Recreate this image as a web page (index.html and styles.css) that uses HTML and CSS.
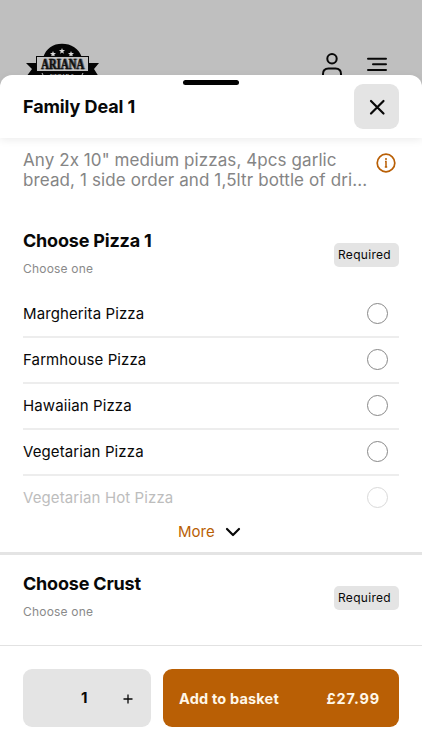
FILE: index.html
```html
<!DOCTYPE html>
<html lang="en">
<head>
<meta charset="utf-8">
<meta name="viewport" content="width=device-width, initial-scale=1">
<title>Family Deal 1</title>
<link rel="stylesheet" href="styles.css">
</head>
<body>
<div class="app">
  <header class="topbar">
    <svg class="logo" width="74" height="34" viewBox="0 0 74 34">
      <path d="M0 20h11v-2h52v2h10l-5 6 5 8H0l6-8z" fill="#050505"/>
      <path d="M17 15C20 5 27 .7 36 .7S53 5 56 15z" fill="#050505"/>
      <path d="M14 30h44v4H14z" fill="#050505"/>
      <g fill="#d8d8d8">
        <path id="star" d="M36 4.900l.8 2.100 2.200.1-1.700 1.400.6 2.200-1.900-1.200-1.900 1.200.6-2.200-1.700-1.400 2.200-.1z"/>
        <use href="#star" x="-9" y="3"/><use href="#star" x="9" y="3"/>
      </g>
      <rect x="10.500" y="13.500" width="52" height="15" fill="#c3c3c3" stroke="#080808" stroke-width="1"/>
      <text class="logo-name logo-shade" x="16" y="26" textLength="43" lengthAdjust="spacingAndGlyphs">ARIANA</text>
      <text class="logo-name" x="15" y="25.500" textLength="43" lengthAdjust="spacingAndGlyphs">ARIANA</text>
      <text class="logo-sub" x="24" y="34" textLength="25" lengthAdjust="spacingAndGlyphs">KEBAB &amp;</text>
      <path d="M16 30l2 4M57 30l-2 4" stroke="#c3c3c3" stroke-width="1"/>
    </svg>
    <div class="nav">
      <svg width="24" height="24" viewBox="0 0 24 24" fill="none" stroke="#080808" stroke-width="2"><circle cx="12" cy="6.700" r="4.700"/><path d="M3 24v-2q0-5.500 5.500-5.500h7q5.500 0 5.500 5.500v2"/></svg>
      <svg width="22" height="24" viewBox="0 0 22 24" fill="none" stroke="#080808" stroke-width="2" stroke-linecap="round"><path d="M2 6.800h18M7 12.300h13M2 18h18"/></svg>
    </div>
  </header>
  <main class="sheet">
    <span class="handle"></span>
    <div class="sheet-head">
      <h1>Family Deal 1</h1>
      <button class="close" aria-label="Close"><svg width="18" height="18" viewBox="0 0 18 18"><path d="M3 3l12.500 12.500M15.500 3L3 15.500" stroke="#080808" stroke-width="2.200" stroke-linecap="round"/></svg></button>
    </div>
    <div class="content">
      <div class="about">
        <p>Any 2x 10" medium pizzas, 4pcs garlic<br><span class="second">bread, 1 side order and 1,5ltr bottle of dri...</span></p>
        <svg width="20" height="20" viewBox="0 0 20 20" fill="none" stroke="#b95f05"><circle cx="10" cy="10" r="8.800" stroke-width="1.700"/><path d="M9 8.500h1V14M8.800 14h2.400" stroke-width="1.500"/><circle cx="10" cy="6" r="1" fill="#b95f05" stroke="none"/></svg>
      </div>
      <section class="group">
        <div class="group-head">
          <div><h2>Choose Pizza 1</h2><p>Choose one</p></div>
          <span class="tag">Required</span>
        </div>
        <ul>
          <li><span>Margherita Pizza</span><i></i></li>
          <li><span>Farmhouse Pizza</span><i></i></li>
          <li><span>Hawaiian Pizza</span><i></i></li>
          <li><span>Vegetarian Pizza</span><i></i></li>
          <li class="faded"><span>Vegetarian Hot Pizza</span><i></i></li>
        </ul>
        <div class="more"><span>More</span><svg width="16" height="10" viewBox="0 0 16 10" fill="none" stroke="#080808" stroke-width="2.200" stroke-linecap="round" stroke-linejoin="round"><path d="M2 2l6 6 6-6"/></svg></div>
      </section>
      <section class="group crust">
        <div class="group-head">
          <div><h2>Choose Crust</h2><p>Choose one</p></div>
          <span class="tag">Required</span>
        </div>
      </section>
    </div>
    <footer>
      <div class="qty"><b>1</b><svg width="10" height="10" viewBox="0 0 10 10"><path d="M5 .5v9M.5 5h9" stroke="#080808" stroke-width="1.300"/></svg></div>
      <button class="add"><span class="add-label">Add to basket</span><span class="price">£27.99</span></button>
    </footer>
  </main>
</div>
</body>
</html>
```
FILE: styles.css
```css
* { box-sizing: border-box; }
body, h1, h2, p, ul { margin: 0; padding: 0; }
body { font-family: Inter, sans-serif; font-feature-settings: "calt" 0; color: #080808; background: #bfbfbf; }
button { border: 0; padding: 0; font: inherit; color: inherit; }
svg { display: block; flex: none; }
.app { height: 750px; overflow: hidden; display: flex; flex-direction: column; }
.topbar { height: 75px; flex: none; overflow: hidden; padding: 43px 34px 0 26px; display: flex; justify-content: space-between; }
.logo-name { font: bold 14px "Liberation Serif", serif; fill: #111; stroke: #111; stroke-width: .4; }
.logo-shade { fill: #666; stroke: #666; }
.logo-sub { font: bold 5px "Liberation Serif", serif; fill: #bbb; }
.nav { display: flex; gap: 22px; padding-top: 9px; }
.sheet { position: relative; flex: 1; min-height: 0; background: #fff; border-radius: 12px 12px 0 0; display: flex; flex-direction: column; }
.handle { position: absolute; left: 183px; top: 5px; width: 56px; height: 5px; border-radius: 3px; background: #030303; }
.sheet-head { height: 63px; flex: none; padding: 0 23px; display: flex; justify-content: space-between; align-items: center; box-shadow: 0 2px 9px rgba(0,0,0,.08); border-radius: 12px 12px 0 0; }
h1 { font-size: 18px; line-height: 24px; font-weight: 650; letter-spacing: -.1px; }
.close { width: 45px; height: 45px; border-radius: 9px; background: #e4e4e4; display: grid; place-items: center; }
.content { flex: 1; min-height: 0; overflow: hidden; padding-top: 12px; }
.about { height: 78px; padding: 0 26px 0 23px; display: flex; justify-content: space-between; }
.about p { font-size: 17px; line-height: 20px; color: #858585; white-space: nowrap; letter-spacing: .08px; }
.about .second { letter-spacing: .11px; }
.about svg { margin-top: 3px; }
.group-head { height: 64px; padding: 0 23px; display: flex; justify-content: space-between; }
h2 { font-size: 18px; line-height: 26px; font-weight: 650; white-space: nowrap; letter-spacing: -.2px; }
.group-head p { font-size: 12px; line-height: 18px; margin-top: 6px; color: #8a8a8a; letter-spacing: .2px; }
.tag { width: 65px; height: 24px; margin-top: 15px; padding-left: 4px; border-radius: 5px; background: #e4e4e4; font-size: 12px; line-height: 24px; letter-spacing: .3px; }
ul { list-style: none; padding: 0 23px; }
li { height: 46px; border-bottom: 2px solid #ededed; padding: 0 11px 1px 0; display: flex; align-items: center; justify-content: space-between; font-size: 15px; letter-spacing: .11px; }
li span { margin-bottom: 1px; }
li i { width: 21px; height: 21px; border: 1px solid #888; border-radius: 50%; }
li.faded { border-color: transparent; color: #bdbdbd; }
li.faded i { border-color: #d9d9d9; }
.more { height: 30px; padding: 0 0 11px 178px; display: flex; align-items: center; gap: 10px; font-size: 15px; line-height: 20px; color: #b95f05; }
.crust { border-top: 3px solid #e4e4e4; padding-top: 16px; }
footer { height: 105px; flex: none; border-top: 1px solid #e2e2e2; padding: 23px 23px 0; display: flex; gap: 12px; background: #fff; }
.qty { width: 128px; height: 58px; border-radius: 9px; background: #e4e4e4; display: flex; align-items: center; padding: 0 0 1px 58px; }
.qty b { font-size: 15px; font-weight: 700; width: 42px; }
.qty svg { margin-top: 2px; }
.add { flex: 1; height: 58px; border-radius: 9px; background: #b95f05; color: #fff7e9; display: flex; justify-content: space-between; align-items: center; padding: 1px 19px 0 16px; font-size: 14.500px; font-weight: 650; letter-spacing: .18px; }
.price { letter-spacing: .85px; }
```
